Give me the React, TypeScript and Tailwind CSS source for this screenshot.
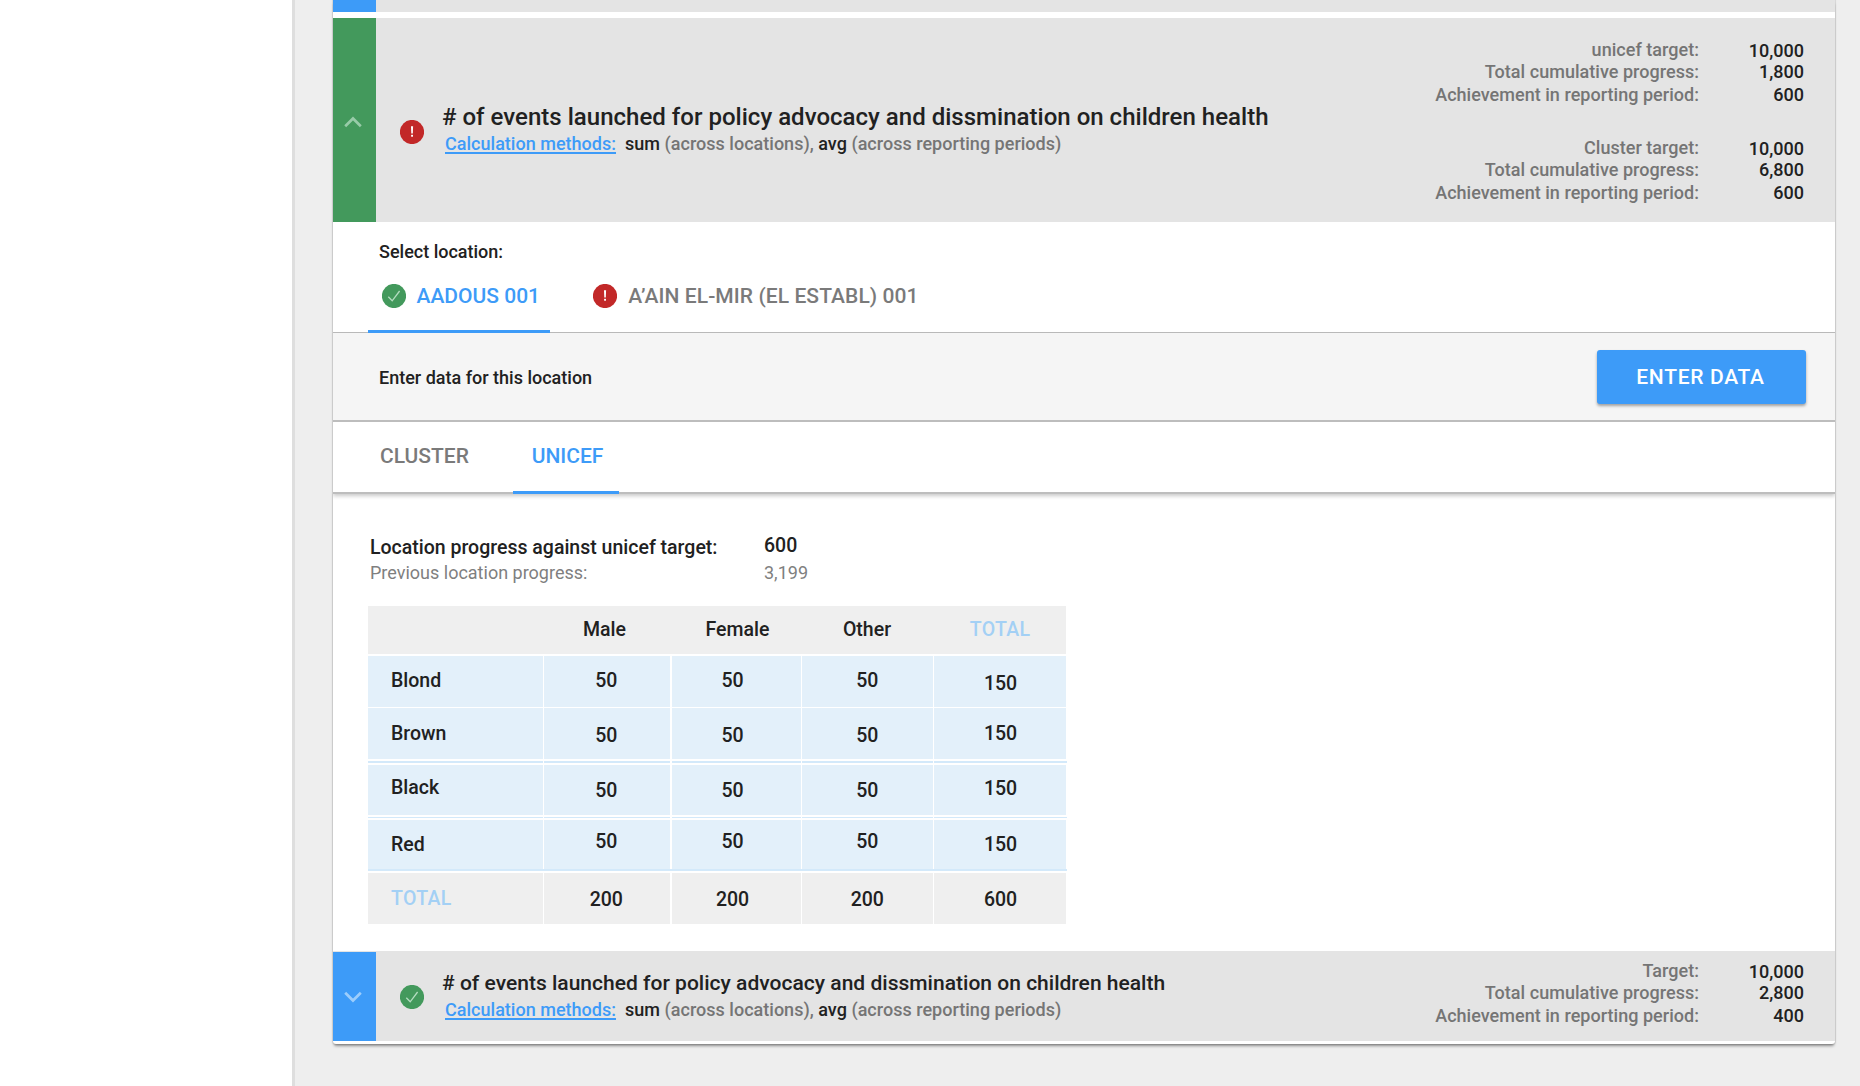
import type { ReactNode } from "react";

function CheckIcon() {
  return (
    <svg width="24" height="24" viewBox="0 0 24 24" className="block shrink-0">
      <circle cx="12" cy="12" r="12.1" fill="#43995c" />
      <path d="M6.3 12.7 L10.2 16.8 L17.6 7" fill="none" stroke="#b4dcc0" strokeWidth="1.3" />
    </svg>
  );
}

function AlertIcon() {
  return (
    <svg width="24" height="24" viewBox="0 0 24 24" className="block shrink-0">
      <circle cx="12" cy="12" r="12.1" fill="#c22828" />
      <path d="M11 6.2 H13.1 L12.8 13.4 H11.3 Z" fill="#fff" />
      <rect x="11.1" y="14.8" width="1.9" height="1.9" fill="#fff" />
    </svg>
  );
}

function Chevron({ up }: { up?: boolean }) {
  return (
    <svg width="18" height="12" viewBox="0 0 18 12" className="mr-[3px] block">
      <path
        d={up ? "M1.2 10.2 L9 2.5 L16.8 10.2" : "M1.2 1.8 L9 9.5 L16.8 1.8"}
        fill="none"
        stroke={up ? "#98cba8" : "#9ccdfc"}
        strokeWidth="2.7"
      />
    </svg>
  );
}

function Methods() {
  return (
    <p className="flex text-[18px] leading-[22px] tracking-[0.015px] whitespace-pre text-[#757575]">
      <a className="mr-[9px] ml-[3px] text-[#3d9bf8] underline decoration-[1.5px] underline-offset-[2px] [text-decoration-skip-ink:none]">
        Calculation methods:
      </a>
      <span>
        <span className="text-[#212121]">sum</span> (across locations), <span className="text-[#212121]">avg</span> (across
        reporting periods)
      </span>
    </p>
  );
}

function Stats({ rows }: { rows: [string, string][] }) {
  return (
    <dl className="grid grid-cols-[280px_105px] grid-rows-[22px_23px_22px] text-right text-[18px] leading-[22px]">
      {rows.map(([label, value], i) => (
        <div key={label} className="contents">
          <dt className="tracking-[0.03px] text-[#757575]">{label}</dt>
          <dd className={i === 0 ? "pt-px text-[#212121]" : "text-[#212121]"}>{value}</dd>
        </div>
      ))}
    </dl>
  );
}

const COLS = "grid grid-cols-[175px_126px_129px_131px_132px] gap-x-[1.25px]";

const SHIFT = ["", "pr-[2px]", "pr-[7px]", "pr-[0px]", ""];

function Row({
  tone,
  height,
  cells,
  pads,
}: {
  tone: string;
  height: string;
  cells: string[];
  pads: [string, string, string];
}) {
  return (
    <div className={`${COLS} ${height} text-center`}>
      {cells.map((c, i) => {
        const base = i === 0 ? `pl-[23px] text-left ${pads[0]}` : i === 4 ? `pl-px ${pads[2]}` : `${SHIFT[i]} ${pads[1]}`;
        const muted = c === "TOTAL" ? "text-[#a3d0f5] tracking-[0.3px]" : "";
        return (
          <div key={i} className={`${tone} ${base} ${muted}`}>
            {c}
          </div>
        );
      })}
    </div>
  );
}

function BlueRule({ height }: { height: string }) {
  return (
    <div className={`${COLS} ${height} w-[699px]`}>
      {[0, 1, 2, 3, 4].map((i) => (
        <div key={i} className={i === 4 ? "-mr-px bg-[#d3e9fa]" : "bg-[#d3e9fa]"} />
      ))}
    </div>
  );
}

function Strip({ children, className }: { children?: ReactNode; className: string }) {
  return <div className={`flex w-[43px] shrink-0 justify-center ${className}`}>{children}</div>;
}

const TITLE = "# of events launched for policy advocacy and dissmination on children health";
const BLUE_CELL = "bg-[#e3f0fa]";
const GREY_CELL = "bg-[#efefef]";

export default function App() {
  return (
    <div className="flex h-[1086px] w-[1860px] overflow-hidden bg-[#eeeeee] font-['Roboto',sans-serif] font-medium text-[#212121]">
      <aside className="w-[295px] shrink-0 border-r-[3px] border-[#dedede] bg-white" />
      <main className="ml-[38px] h-[1044px] w-[1502px] rounded-b-[3px] bg-white shadow-[0_0_1px_1px_rgba(0,0,0,0.1),0_3px_3px_-1px_rgba(0,0,0,0.4)]">
        <div className="flex h-[12px]">
          <Strip className="bg-[#3d9bf8]" />
          <div className="grow bg-[#e4e4e4]" />
        </div>

        <section className="mt-[6px] flex h-[204px] bg-[#e4e4e4]">
          <Strip className="bg-[#43995c] pt-[98px]">
            <Chevron up />
          </Strip>
          <div className="ml-[24px] pt-[102px]">
            <AlertIcon />
          </div>
          <div className="ml-[18px] pt-[84px]">
            <h2 className="text-[24px] leading-[30px] tracking-[0.018px] whitespace-nowrap">{TITLE}</h2>
            <div className="pt-px">
              <Methods />
            </div>
          </div>
          <div className="mr-[31px] ml-auto flex flex-col gap-[31px] pt-[21px]">
            <Stats
              rows={[
                ["unicef target:", "10,000"],
                ["Total cumulative progress:", "1,800"],
                ["Achievement in reporting period:", "600"],
              ]}
            />
            <Stats
              rows={[
                ["Cluster target:", "10,000"],
                ["Total cumulative progress:", "6,800"],
                ["Achievement in reporting period:", "600"],
              ]}
            />
          </div>
        </section>

        <section className="h-[111px] border-b border-[#b9b9b9] pt-[19px]">
          <p className="pl-[46px] text-[18px] leading-[22px]">Select location:</p>
          <div className="flex pl-[35px] text-[21px]">
            <div className="flex h-[70px] w-[182px] border-b-[3px] border-[#3d9bf8] pt-[20px] pl-[14px] text-[#3d9bf8]">
              <div className="pt-[1px]">
                <CheckIcon />
              </div>
              <span className="ml-[10.5px] leading-[26px]">AADOUS 001</span>
            </div>
            <div className="flex pt-[20px] pl-[43.3px] text-[#7a7a7a]">
              <div className="pt-[1px]">
                <AlertIcon />
              </div>
              <span className="ml-[11px] leading-[26px] tracking-[0.08px] whitespace-nowrap">A’AIN EL-MIR (EL ESTABL) 001</span>
            </div>
          </div>
        </section>

        <section className="flex h-[89px] justify-between border-b-2 border-[#bdbdbd] bg-[#f5f5f5] pr-[29px] pl-[46px]">
          <p className="pt-[34px] text-[18px] leading-[22px]">Enter data for this location</p>
          <button className="mt-[17px] h-[54px] w-[209px] rounded-[3px] bg-[#3d9bf8] pr-[2px] text-[21px] leading-[55px] tracking-[0.7px] text-white shadow-[0_2px_3px_rgba(0,0,0,0.35)]">
            ENTER DATA
          </button>
        </section>

        <section className="flex h-[72px] border-b-2 border-[#bdbdbd] pl-[27px] text-[21px] leading-[26px] shadow-[0_2px_4px_rgba(0,0,0,0.22)] [clip-path:inset(0_0_-10px_0)]">
          <div className="w-[153px] pt-[21px] pl-[20px] text-[#7a7a7a]">CLUSTER</div>
          <div className="h-[72px] w-[106px] border-b-[3px] border-[#3d9bf8] pt-[21px] pl-[18.7px] text-[#3d9bf8]">UNICEF</div>
        </section>

        <section className="h-[457px] pt-[41px] pl-[35px]">
          <div className="grid h-[71px] grid-cols-[394px_200px] grid-rows-[25px_26px] pl-[2px] leading-[26px]">
            <p className="text-[19.5px]">Location progress against unicef target:</p>
            <p className="-mt-[2px] text-[19.5px]">600</p>
            <p className="text-[18px] font-normal text-[#7f7f7f]">Previous location progress:</p>
            <p className="text-[18px] font-normal text-[#7f7f7f]">3,199</p>
          </div>

          <div className="w-[698px] text-[19.5px] leading-[20px]">
            <div className={`grid h-[48px] grid-cols-[175px_127px_130px_133px_133px] pt-[14px] text-center ${GREY_CELL}`}>
              <span />
              <span className="pr-[4px]">Male</span>
              <span className="pl-[5px]">Female</span>
              <span className="pl-[1px]">Other</span>
              <span className="pl-px tracking-[0.3px] text-[#a3d0f5]">TOTAL</span>
            </div>
            <div className="h-[2px]" />
            <Row tone={BLUE_CELL} height="h-[51px]" cells={["Blond", "50", "50", "50", "150"]} pads={["pt-[15px]", "pt-[15px]", "pt-[18px]"]} />
            <div className="h-px" />
            <Row tone={BLUE_CELL} height="h-[51px]" cells={["Brown", "50", "50", "50", "150"]} pads={["pt-[16px]", "pt-[18px]", "pt-[16px]"]} />
            <div className="h-[2px]" />
            <BlueRule height="h-[2px]" />
            <div className="h-[2px]" />
            <Row tone={BLUE_CELL} height="h-[50px]" cells={["Black", "50", "50", "50", "150"]} pads={["pt-[13px]", "pt-[16px]", "pt-[14px]"]} />
            <div className="h-[2px]" />
            <BlueRule height="h-px" />
            <div className="h-[2px]" />
            <Row tone={BLUE_CELL} height="h-[49px]" cells={["Red", "50", "50", "50", "150"]} pads={["pt-[15px]", "pt-[12px]", "pt-[15px]"]} />
            <div className="h-[2px] w-[699px] bg-[#d3e9fa]" />
            <div className="h-[2px]" />
            <Row tone={GREY_CELL} height="h-[51px]" cells={["TOTAL", "200", "200", "200", "600"]} pads={["pt-[16px]", "pt-[17px]", "pt-[17px]"]} />
          </div>
        </section>

        <section className="flex h-[90px] bg-[#e4e4e4]">
          <Strip className="mt-px bg-[#3d9bf8] pt-[39px]">
            <Chevron />
          </Strip>
          <div className="ml-[24px] pt-[34px]">
            <CheckIcon />
          </div>
          <div className="ml-[18px] pt-[19px]">
            <h2 className="text-[21px] leading-[26px] tracking-[0.015px] whitespace-nowrap">{TITLE}</h2>
            <div className="pt-[3px]">
              <Methods />
            </div>
          </div>
          <div className="mr-[31px] ml-auto pt-[9px]">
            <Stats
              rows={[
                ["Target:", "10,000"],
                ["Total cumulative progress:", "2,800"],
                ["Achievement in reporting period:", "400"],
              ]}
            />
          </div>
        </section>
      </main>
    </div>
  );
}
